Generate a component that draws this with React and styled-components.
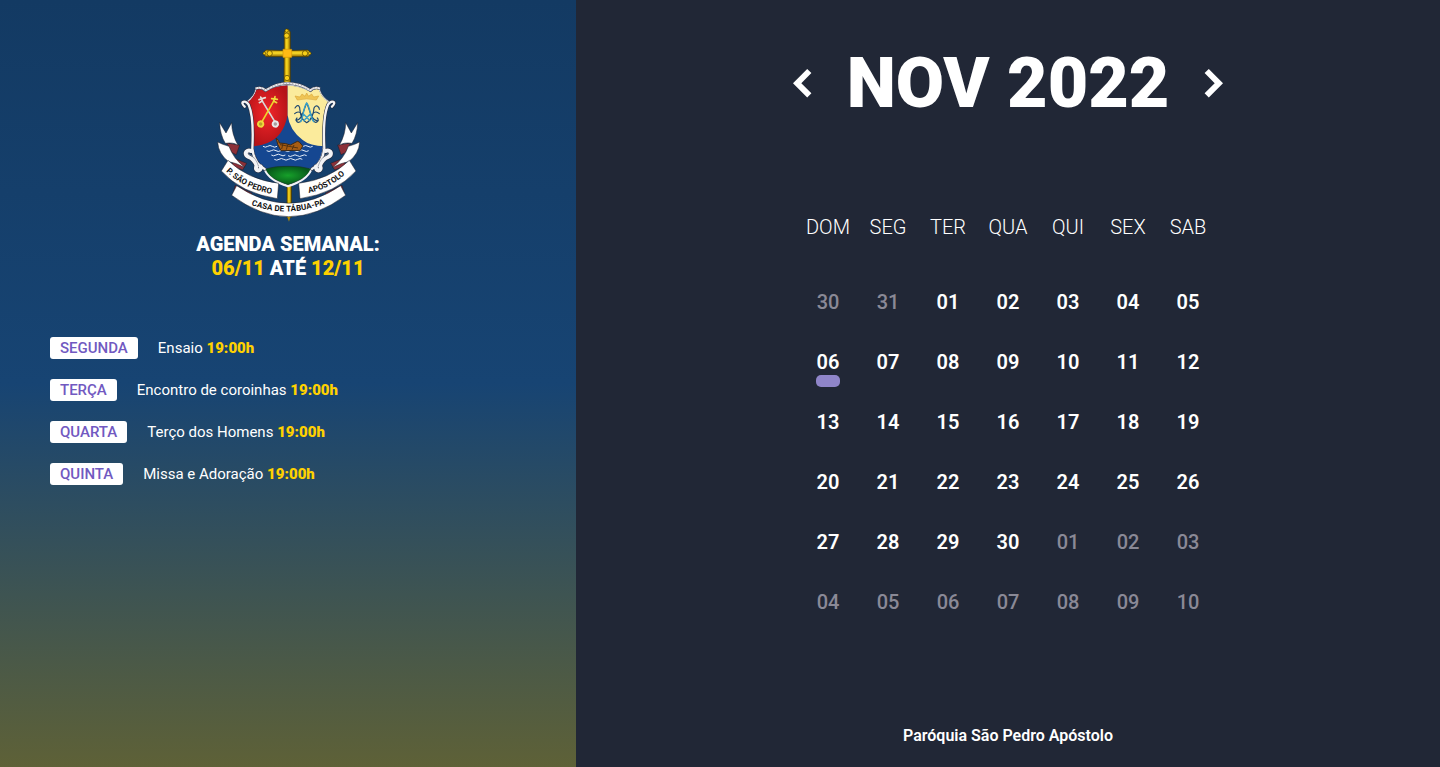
import React from 'react';
import styled, { createGlobalStyle } from 'styled-components';

const GlobalStyle = createGlobalStyle`
  * { margin: 0; padding: 0; box-sizing: border-box; }
  body { font-family: Roboto, sans-serif; color: #fff; }
`;

const Page = styled.div`
  display: flex;
  height: 100vh;
  overflow: hidden;
`;

const Agenda = styled.aside`
  width: 40%;
  padding: 20px 50px;
  display: flex;
  flex-direction: column;
  background: linear-gradient(180deg, #133a63 0%, #174473 50%, #5e6137 100%);
`;

const Crest = styled.svg`
  width: 160px;
  height: 205px;
  align-self: center;
`;

const AgendaTitle = styled.h2`
  margin-top: 7px;
  font-size: 20px;
  line-height: 24px;
  font-weight: 900;
  text-align: center;
`;

const Gold = styled.span`
  color: #ffd100;
`;

const EventList = styled.ul`
  margin-top: 57px;
  display: flex;
  flex-direction: column;
  gap: 20px;
  list-style: none;
`;

const EventRow = styled.li`
  display: flex;
  align-items: center;
  gap: 20px;
  height: 22px;
  font-size: 15px;
`;

const DayTag = styled.span`
  height: 22px;
  padding: 0 10px;
  line-height: 22px;
  border-radius: 3px;
  background: #fff;
  color: #7159c1;
  font-weight: 500;
`;

const EventTime = styled.strong`
  color: #ffd100;
  font-weight: 900;
`;

const Calendar = styled.main`
  flex: 1;
  display: flex;
  flex-direction: column;
  align-items: center;
  background: #212736;
`;

const MonthBar = styled.header`
  margin-top: 41px;
  display: flex;
  align-items: center;
  justify-content: space-between;
  width: 430px;
  height: 84px;
`;

const MonthTitle = styled.h1`
  font-size: 70px;
  line-height: 84px;
  font-weight: 900;
  white-space: nowrap;
`;

const NavButton = styled.button`
  display: flex;
  border: 0;
  background: none;
  transform: ${(p) => (p.$next ? 'scaleX(-1)' : 'none')};
`;

const Days = styled.div`
  display: grid;
  grid-template-columns: repeat(7, 60px);
  grid-auto-rows: 60px;
  line-height: 24px;
`;

const Weekdays = styled(Days)`
  margin-top: 72px;
  margin-bottom: 15px;
  font-size: 20px;
  font-weight: 300;
`;

const Cell = styled.div`
  position: relative;
  display: flex;
  align-items: center;
  justify-content: center;
`;

const Day = styled(Cell)`
  font-size: 20px;
  font-weight: ${(p) => (p.$muted ? 500 : 600)};
  color: ${(p) => (p.$muted ? '#8a8996' : '#fff')};
`;

const Marker = styled.span`
  position: absolute;
  left: 18px;
  top: 43px;
  width: 24px;
  height: 12px;
  border-radius: 5px;
  background: #8f85c9;
`;

const Footer = styled.footer`
  margin-top: auto;
  padding-bottom: 21px;
  font-size: 16px;
  line-height: 20px;
  font-weight: 600;
`;

const events = [
  ['SEGUNDA', 'Ensaio'],
  ['TERÇA', 'Encontro de coroinhas'],
  ['QUARTA', 'Terço dos Homens'],
  ['QUINTA', 'Missa e Adoração'],
];

const weekdays = ['DOM', 'SEG', 'TER', 'QUA', 'QUI', 'SEX', 'SAB'];

const days = Array.from({ length: 42 }, (_, i) => {
  const n = i - 1;
  if (n < 1) return { n: n + 31, muted: true };
  if (n > 30) return { n: n - 30, muted: true };
  return { n, muted: false };
});

const Chevron = () => (
  <svg width="19" height="29" viewBox="0 0 19 29" fill="#fff">
    <path d="M0 14.2 14.2 0 18.4 4.1 8.3 14.2 18.4 24.3 14.2 28.4Z" />
  </svg>
);

const RibbonEnd = () => (
  <g stroke="#1b1b25" strokeWidth="1.5" strokeLinejoin="round">
    <path d="M56 369 95 375 85 404 72 398Z" fill="#8c3038" />
    <path d="M35 308 54 339 71 308Q71 342 90 376Q76 366 52 370Q36 344 35 308Z" fill="#fff" />
    <path d="M76 414 116 430 104 450 72 438Z" fill="#8c3038" />
    <path d="M29 366Q44 374 63 379Q76 416 111 443Q84 428 62 425Q31 402 29 366Z" fill="#fff" />
    <path d="M82 496 132 520 120 536 74 524Z" fill="#8c3038" />
    <path d="M60 421Q118 478 212 490L208 536Q100 520 40 453Z" fill="#fff" />
  </g>
);

const scrollEdge = 'M110 260C93 244 112 239 122 254Q138 290 133 386Q138 430 170 447';
const scrollCurl = 'M130 393C110 387 109 405 122 411Q138 417 146 437C137 457 162 454 158 440';

const Scroll = () => (
  <g fill="none" strokeLinecap="round">
    <g stroke="#252a3c">
      <path strokeWidth="10" d={scrollEdge} />
      <path strokeWidth="15" d={scrollCurl} />
    </g>
    <g stroke="#f3f3f6">
      <path strokeWidth="7" d={scrollEdge} />
      <path strokeWidth="12" d={scrollCurl} />
    </g>
    <path d="M123 397Q117 402 128 405Q144 414 151 437" stroke="#8a8d99" strokeWidth="2" />
  </g>
);

const ParishCrest = () => (
  <Crest viewBox="0 0 480 615">
    <defs>
      <linearGradient id="gold" x1="0" x2="1">
        <stop offset="0" stopColor="#a87b00" />
        <stop offset=".45" stopColor="#ffdf20" />
        <stop offset="1" stopColor="#8c6500" />
      </linearGradient>
      <linearGradient id="goldBar" x1="0" x2="0" y1="0" y2="1">
        <stop offset="0" stopColor="#b18400" />
        <stop offset=".45" stopColor="#ffe02a" />
        <stop offset="1" stopColor="#8c6500" />
      </linearGradient>
      <radialGradient id="red" cx=".55" cy=".5">
        <stop offset="0" stopColor="#f3262a" />
        <stop offset="1" stopColor="#b51318" />
      </radialGradient>
      <radialGradient id="green">
        <stop offset="0" stopColor="#16a02a" />
        <stop offset="1" stopColor="#07591a" />
      </radialGradient>
      <clipPath id="field">
        <path d="M237 196Q200 198 172 216Q160 204 146 208Q138 232 120 246Q138 276 136 380Q140 430 176 446Q226 460 240 492Q254 460 304 446Q340 430 344 380Q342 276 360 246Q340 232 332 208Q318 204 308 216Q276 198 237 196Z" />
      </clipPath>
      <path id="leftText" d="M54 454Q112 511 206 524" />
      <path id="rightText" d="M302 519Q368 506 418 456" />
      <path id="bottomText" d="M130 555Q240 596 356 550" />
    </defs>

    <g stroke="#493900" strokeWidth="2">
      <rect x="237" y="490" width="13" height="102" fill="url(#gold)" />
      <path d="M229 36 234 28 241 28 247 36V190H228Z" fill="url(#gold)" />
      <path d="M174 90 238 92 300 90 309 100 300 110H174L165 100Z" fill="url(#goldBar)" />
      <g fill="#f8cf18">
        <circle cx="236" cy="32" r="5" />
        <circle cx="236" cy="47" r="8" />
        <circle cx="185" cy="100" r="8" />
        <circle cx="291" cy="100" r="8" />
        <circle cx="237" cy="174" r="8" />
        <circle cx="169" cy="100" r="4" />
        <circle cx="305" cy="100" r="4" />
      </g>
      <path d="M225 88H251V112H225Z" fill="#ffba14" stroke="#d99b08" />
    </g>

    <path d="M237 188Q198 190 173 209Q160 198 142 207Q136 232 112 246Q136 280 132 382Q138 436 176 448Q184 480 240 500Q296 480 304 448Q342 436 348 382Q344 280 368 246Q342 232 336 207Q318 198 307 209Q276 190 237 188Z" fill="#f3f3f6" stroke="#252a3c" strokeWidth="2" />
    <g clipPath="url(#field)">
      <rect x="110" y="185" width="260" height="270" fill="#154791" />
      <path d="M100 180H239V286Q226 350 180 368Q158 378 130 379H100Z" fill="url(#red)" />
      <path d="M239 180H380V379H350Q306 378 284 360Q244 330 239 286Z" fill="#fbeb9c" />
    </g>
    <path d="M171 447Q206 437 240 439Q274 437 309 447Q298 477 240 494Q182 477 171 447Z" fill="url(#green)" stroke="#153329" strokeWidth="2" />
    <path d="M170 449Q184 482 240 499Q296 482 310 449" fill="none" stroke="#f3f3f6" strokeWidth="6" />
    <path d="M142 206Q160 199 173 211Q206 190 238 190Q276 190 307 211Q320 199 336 206" fill="none" stroke="#343849" strokeWidth="9" />
    <path d="M142 206Q160 199 173 211Q206 190 238 190Q276 190 307 211Q320 199 336 206" fill="none" stroke="#e8e8ec" strokeWidth="6" />
    <path d="M142 206Q160 199 173 211Q206 190 238 190Q276 190 307 211Q320 199 336 206" fill="none" stroke="#8f929c" strokeWidth="4" strokeDasharray="2 7" />

    <g fill="none" strokeLinecap="round">
      <path d="M162 242 200 304" stroke="#d8d8d8" strokeWidth="5" />
      <path d="M198 242 159 310" stroke="#ecd62b" strokeWidth="5" />
      <path d="M154 248 163 243 158 231M153 239 172 233" stroke="#e5e0da" strokeWidth="5" />
      <path d="M206 248 197 243 201 230M191 236 208 238" stroke="#efda3c" strokeWidth="5" />
      <g strokeWidth="6" strokeDasharray="4 3">
        <circle cx="158" cy="312" r="8" stroke="#efda3c" fill="#bba22b" />
        <circle cx="202" cy="312" r="8" stroke="#e8e8e8" fill="#a79c9d" />
      </g>
    </g>

    <path d="M268 240 261 228 276 231 282 222 291 229 296 219 302 229 311 222 317 231 332 228 325 240Q296 233 268 240Z" fill="#efc454" stroke="#dba83a" strokeWidth="2" />
    <g fill="none" stroke="#1d4770" strokeWidth="3.5" strokeLinecap="round">
      <path d="M261 264C270 250 276 258 276 272Q279 300 296 308C310 302 317 280 318 264C326 250 334 262 334 268M263 300C282 306 290 258 296 250C304 260 308 306 331 302M260 281C275 266 289 288 280 301C270 315 260 301 267 294M334 281C319 266 305 288 315 301C323 315 336 301 328 294" />
      <path d="M296 249C286 260 287 292 278 305M296 249C306 260 307 292 317 305M287 283 306 302M307 282 287 302" stroke="#3aa1c8" strokeWidth="4" />
    </g>

    <g fill="none" stroke="#e4edf8" strokeWidth="3">
      <path d="M165 379q7 5 14 0t14 0 14 0M272 379q7 5 14 0t14 0 14 0M176 392q7 5 14 0t14 0 14 0 14 0 14 0 14 0 14 0 14 0 14 0M190 405q7 5 14 0t14 0 14 0M240 407q7 5 14 0t14 0 14 0 14 0M199 418q7 5 14 0t14 0 14 0 14 0 14 0 14 0" />
    </g>
    <path d="M204 354Q214 360 214 369Q236 370 247 375L268 364 274 366 284 378 277 391 219 392Q207 374 204 354Z" fill="#a85d13" stroke="#3d2916" strokeWidth="3" />
    <path d="M216 374 270 384M225 370 221 387M239 375 235 389M258 375 252 389" stroke="#56320f" strokeWidth="3" />

    <Scroll />
    <g transform="matrix(-1 0 0 1 482 0)"><Scroll /></g>
    <RibbonEnd />
    <g transform="matrix(-1 0 0 1 484 0)"><RibbonEnd /></g>
    <path d="M86 497Q242 602 398 497L413 526Q242 654 71 526Z" fill="#fff" stroke="#1b1b25" strokeWidth="1.5" />
    <path d="M238 591 243 605 247 591Z" fill="#b58b00" />
    <g fill="#111" fontFamily="Roboto, sans-serif" fontWeight="700" fontSize="24">
      <text><textPath href="#leftText" textLength="154">P. SÃO PEDRO</textPath></text>
      <text><textPath href="#rightText" textLength="124">APÓSTOLO</textPath></text>
      <text><textPath href="#bottomText" textLength="226">CASA DE TÁBUA-PA</textPath></text>
    </g>
  </Crest>
);

export default function App() {
  return (
    <Page>
      <GlobalStyle />
      <Agenda>
        <ParishCrest />
        <AgendaTitle>
          AGENDA SEMANAL:<br />
          <Gold>06/11</Gold> ATÉ <Gold>12/11</Gold>
        </AgendaTitle>
        <EventList>
          {events.map(([day, name]) => (
            <EventRow key={day}>
              <DayTag>{day}</DayTag>
              <span>{name} <EventTime>19:00h</EventTime></span>
            </EventRow>
          ))}
        </EventList>
      </Agenda>
      <Calendar>
        <MonthBar>
          <NavButton aria-label="Mês anterior"><Chevron /></NavButton>
          <MonthTitle>NOV 2022</MonthTitle>
          <NavButton $next aria-label="Próximo mês"><Chevron /></NavButton>
        </MonthBar>
        <Weekdays>
          {weekdays.map((d) => <Cell key={d}>{d}</Cell>)}
        </Weekdays>
        <Days>
          {days.map(({ n, muted }, i) => (
            <Day key={i} $muted={muted}>
              {String(n).padStart(2, '0')}
              {!muted && n === 6 && <Marker />}
            </Day>
          ))}
        </Days>
        <Footer>Paróquia São Pedro Apóstolo</Footer>
      </Calendar>
    </Page>
  );
}
